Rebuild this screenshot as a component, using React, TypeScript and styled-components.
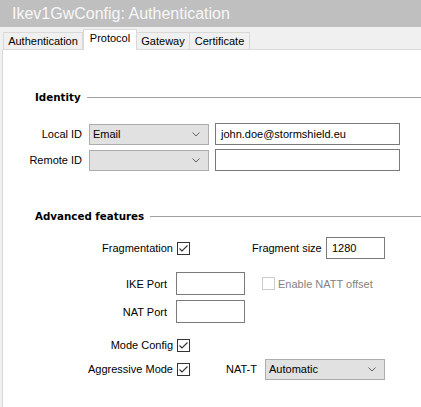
import styled, { createGlobalStyle } from "styled-components";

const GlobalStyle = createGlobalStyle`
  html, body {
    margin: 0;
    padding: 0;
    background: #f0f0f0;
  }
  body {
    font-family: "Liberation Sans", Arial, sans-serif;
    font-size: 11px;
    color: #000;
  }
`;

const Window = styled.div`
  width: 421px;
  height: 407px;
  overflow: hidden;
  background: #f0f0f0;
  display: flex;
  flex-direction: column;
`;

const TitleBar = styled.div`
  height: 27px;
  flex: none;
  background: #bfbfbf;
  color: #f7f7f7;
  font-size: 16px;
  line-height: 27px;
  padding-left: 12px;
  white-space: nowrap;
`;

const TabStrip = styled.div`
  height: 22px;
  flex: none;
  display: flex;
  align-items: flex-end;
  padding-left: 3px;
`;

const Tab = styled.div<{ $active?: boolean; $w: number }>`
  position: relative;
  z-index: ${(p) => (p.$active ? 1 : 0)};
  box-sizing: border-box;
  width: ${(p) => p.$w}px;
  height: ${(p) => (p.$active ? 21 : 17)}px;
  margin-bottom: ${(p) => (p.$active ? -1 : 0)}px;
  border: 1px solid #d9d9d9;
  border-bottom: none;
  border-left-width: ${(p) => (p.$active ? 1 : 0)}px;
  background: ${(p) => (p.$active ? "#fff" : "#f0f0f0")};
  display: flex;
  justify-content: center;
  padding-top: 1px;
  line-height: 15px;
  white-space: nowrap;
  &:first-child {
    border-left-width: 1px;
  }
`;

const Panel = styled.div`
  flex: 1;
  margin-left: 2px;
  background: #fff;
  border-top: 1px solid #d9d9d9;
  border-left: 1px solid #d9d9d9;
  padding-top: 40px;
`;

const SectionHeading = styled.div<{ $mt?: number }>`
  display: flex;
  align-items: center;
  height: 14px;
  margin-top: ${(p) => p.$mt ?? 0}px;
  padding-left: 32px;
  font-family: "DejaVu Sans", Verdana, sans-serif;
  font-weight: bold;
  font-size: 10.3px;
  color: #000;
  &::after {
    content: "";
    flex: 1;
    height: 1px;
    margin-left: 6px;
    background: #a0a0a0;
  }
`;

const IdGrid = styled.div`
  margin-top: 19px;
  display: grid;
  grid-template-columns: 80px 120px 185px;
  grid-auto-rows: 22px;
  column-gap: 6px;
  row-gap: 4px;
  align-items: center;
`;

const Label = styled.span<{ $w?: number; $pr?: number }>`
  width: ${(p) => (p.$w ? `${p.$w}px` : "auto")};
  flex: none;
  text-align: right;
  padding-right: ${(p) => p.$pr ?? 0}px;
  box-sizing: border-box;
  white-space: nowrap;
`;

const IdLabel = styled.span`
  text-align: right;
  margin-right: 1px;
  white-space: nowrap;
`;

const SelectBox = styled.div<{ $w?: number; $ml?: number }>`
  box-sizing: border-box;
  width: ${(p) => (p.$w ? `${p.$w}px` : "auto")};
  margin-left: ${(p) => p.$ml ?? 0}px;
  height: 21px;
  background: #e1e1e1;
  border: 1px solid #adadad;
  display: flex;
  align-items: center;
  justify-content: space-between;
  padding: 0 8px 0 3px;
  flex: none;
`;

const TextBox = styled.div<{ $w?: number; $h?: number; $ml?: number }>`
  box-sizing: border-box;
  width: ${(p) => (p.$w ? `${p.$w}px` : "auto")};
  height: ${(p) => p.$h ?? 22}px;
  margin-left: ${(p) => p.$ml ?? 0}px;
  border: 1px solid #7a7a7a;
  background: #fff;
  display: flex;
  align-items: center;
  padding-left: 5px;
  flex: none;
`;

const Row = styled.div<{ $mt: number; $h: number }>`
  display: flex;
  align-items: center;
  height: ${(p) => p.$h}px;
  margin-top: ${(p) => p.$mt}px;
`;

const Box = styled.span<{ $disabled?: boolean }>`
  box-sizing: border-box;
  width: 13px;
  height: 13px;
  flex: none;
  border: 1px solid ${(p) => (p.$disabled ? "#cccccc" : "#333333")};
  background: #fff;
  display: flex;
  align-items: center;
  justify-content: center;
`;

const Muted = styled.span`
  color: #838383;
  margin-left: 3px;
  white-space: nowrap;
`;

const Gap = styled.span<{ $w: number }>`
  width: ${(p) => p.$w}px;
  flex: none;
`;

const Chevron = () => (
  <svg width="8" height="5" viewBox="0 0 8 5">
    <polyline points="0.5,0.5 4,4 7.5,0.5" fill="none" stroke="#606060" strokeWidth="1" />
  </svg>
);

const Check = ({ checked, disabled }: { checked?: boolean; disabled?: boolean }) => (
  <Box $disabled={disabled}>
    {checked && (
      <svg width="11" height="11" viewBox="0 0 11 11">
        <polyline points="1.5,5.5 4,8 9.5,2.5" fill="none" stroke="#333" strokeWidth="1.1" />
      </svg>
    )}
  </Box>
);

export default function App() {
  return (
    <Window>
      <GlobalStyle />
      <TitleBar>Ikev1GwConfig: Authentication</TitleBar>
      <TabStrip>
        <Tab $w={80}>Authentication</Tab>
        <Tab $w={54} $active>
          Protocol
        </Tab>
        <Tab $w={53}>Gateway</Tab>
        <Tab $w={60}>Certificate</Tab>
      </TabStrip>
      <Panel>
        <SectionHeading>Identity</SectionHeading>
        <IdGrid>
          <IdLabel>Local ID</IdLabel>
          <SelectBox>
            <span>Email</span>
            <Chevron />
          </SelectBox>
          <TextBox>john.doe@stormshield.eu</TextBox>
          <IdLabel>Remote ID</IdLabel>
          <SelectBox>
            <span />
            <Chevron />
          </SelectBox>
          <TextBox />
        </IdGrid>

        <SectionHeading $mt={38}>Advanced features</SectionHeading>

        <Row $mt={14} $h={22}>
          <Label $w={170}>Fragmentation</Label>
          <Gap $w={4} />
          <Check checked />
          <Gap $w={62} />
          <Label $w={67}>Fragment size</Label>
          <TextBox $w={59} $ml={7}>
            1280
          </TextBox>
        </Row>

        <Row $mt={13} $h={23}>
          <Label $w={170} $pr={6}>
            IKE Port
          </Label>
          <TextBox $w={69} $h={23} $ml={3} />
          <Gap $w={17} />
          <Check disabled />
          <Muted>Enable NATT offset</Muted>
        </Row>

        <Row $mt={5} $h={23}>
          <Label $w={170} $pr={6}>
            NAT Port
          </Label>
          <TextBox $w={69} $h={23} $ml={3} />
        </Row>

        <Row $mt={12} $h={20}>
          <Label $w={170}>Mode Config</Label>
          <Gap $w={4} />
          <Check checked />
        </Row>

        <Row $mt={4} $h={20}>
          <Label $w={170}>Aggressive Mode</Label>
          <Gap $w={4} />
          <Check checked />
          <Gap $w={36} />
          <Label $w={31}>NAT-T</Label>
          <SelectBox $w={120} $ml={8}>
            <span>Automatic</span>
            <Chevron />
          </SelectBox>
        </Row>
      </Panel>
    </Window>
  );
}
